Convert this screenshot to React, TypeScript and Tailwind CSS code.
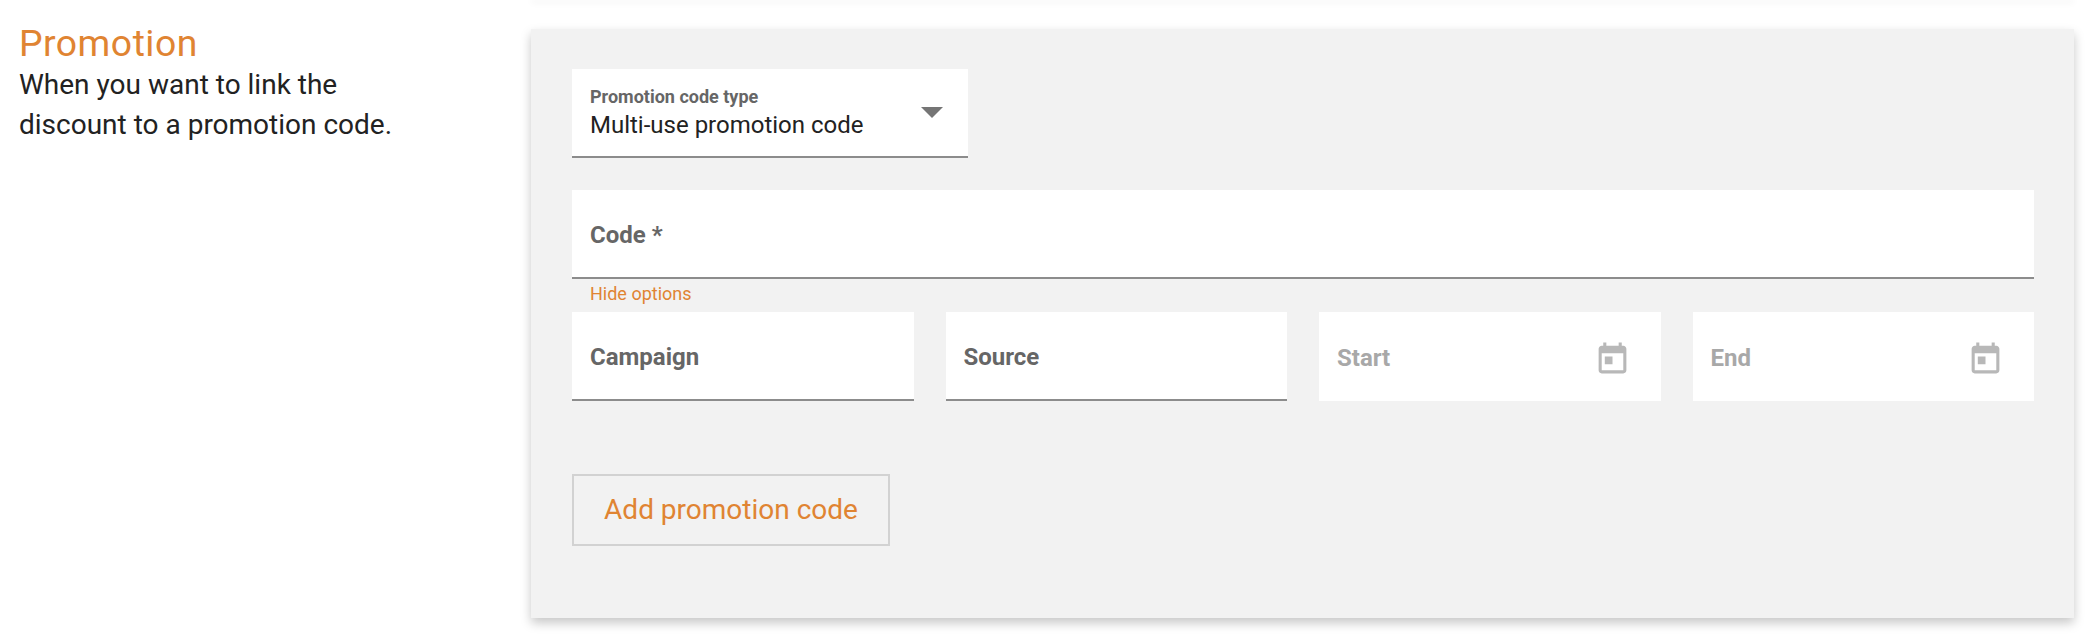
import React from "react";

function TodayIcon() {
  return (
    <svg viewBox="0 0 24 24" className="w-[37px] h-[37px] mt-[4px] fill-[#b8b8b8]">
      <path d="M19 3h-1V1h-2v2H8V1H6v2H5c-1.11 0-1.99.9-1.99 2L3 19c0 1.1.89 2 2 2h14c1.1 0 2-.9 2-2V5c0-1.1-.9-2-2-2zm0 16H5V8h14v11zM7 10h5v5H7z" />
    </svg>
  );
}

function TextField({ label }: { label: string }) {
  return (
    <div className="h-[89px] bg-white border-b-2 border-[#8c8c8c] flex items-center pl-[18px] pt-[2px]">
      <span className="text-[24px] font-bold text-[#666666]">{label}</span>
    </div>
  );
}

function DateField({ label }: { label: string }) {
  return (
    <div className="h-[89px] bg-white flex items-center justify-between pl-[18px] pr-[30px] pt-[2px]">
      <span className="text-[24px] font-bold text-[#a8a8a8]">{label}</span>
      <TodayIcon />
    </div>
  );
}

export default function App() {
  return (
    <div className="w-full h-[642px] bg-white overflow-hidden font-['Roboto',sans-serif]">
      <div className="flex">
        {/* Left Column */}
        <div className="w-[531px] pl-[19px] pt-[22px] shrink-0">
          <h2 className="text-[37.33px] leading-[43px] font-normal tracking-[0.5px] text-[#e08432]">Promotion</h2>
          <p className="text-[28px] leading-[40px] text-[#222222] w-[400px]">
            When you want to link the discount to a promotion code.
          </p>
        </div>

        {/* Right Column */}
        <div className="w-[1543px]">
          <div className="h-px -mt-px shadow-[0_2px_6px_rgba(0,0,0,0.15)]" />
          <div className="mt-[29px] h-[589px] bg-[#f2f2f2] pl-[41px] pr-[40px] pt-[40px] shadow-[0_5px_10px_rgba(0,0,0,0.22)]">
            <div className="w-[396px] h-[89px] bg-white border-b-2 border-[#8c8c8c] flex items-center justify-between pl-[18px] pr-[25px]">
              <div>
                <div className="text-[18px] leading-[24px] font-bold text-[#666666]">Promotion code type</div>
                <div className="text-[24px] leading-[32px] text-[#222222]">Multi-use promotion code</div>
              </div>
              <div className="w-0 h-0 border-x-[11px] border-x-transparent border-t-[11px] border-t-[#757575]" />
            </div>

            <div className="mt-[32px] h-[89px] bg-white border-b-2 border-[#8c8c8c] flex items-center pl-[18px] pt-[2px]">
              <span className="text-[24px] font-bold text-[#666666]">Code *</span>
            </div>
            <div className="pl-[18px] mt-[3px] h-[30px] text-[18px] leading-[24px] text-[#e08432]">Hide options</div>

            <div className="grid grid-cols-4 gap-[32px]">
              <TextField label="Campaign" />
              <TextField label="Source" />
              <DateField label="Start" />
              <DateField label="End" />
            </div>

            <button className="mt-[73px] w-[318px] h-[72px] border-2 border-[#d2d2d2] text-[28px] text-[#e08432]">
              Add promotion code
            </button>
          </div>
        </div>
      </div>
    </div>
  );
}
